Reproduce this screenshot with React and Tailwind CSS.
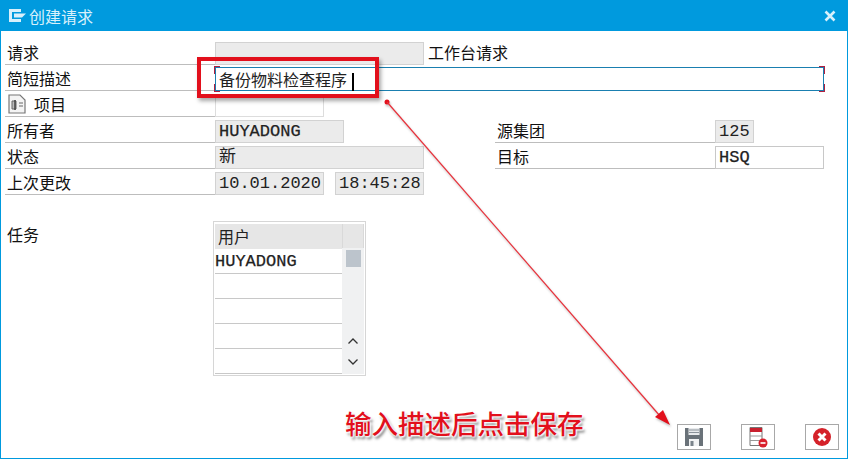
import React from 'react'

const cjk = '"Noto Sans CJK SC", "Liberation Sans", sans-serif'
const mono = '"Liberation Mono", "Noto Sans CJK SC", monospace'

const Label = ({ children, className = 'w-[210px]' }) => (
  <div className={`h-full shrink-0 border-b border-[#bdbdbd] pl-[2px] text-[16px] leading-[26px] text-[#111] ${className}`}>{children}</div>
)

const Field = ({ children, className = '', white = false }) => (
  <div className={`h-[23px] self-end shrink-0 border pl-[3px] text-[17px] leading-[22px] text-[#222] ${white ? 'bg-white border-[#c8c8c8]' : 'bg-[#ebebeb] border-[#d2d2d2]'} ${className}`} style={{ fontFamily: mono }}>
    {children}
  </div>
)

const Row = ({ children }) => <div className="flex h-[26px] shrink-0 items-end">{children}</div>

const DialogIcon = () => (
  <svg width="19" height="15" viewBox="0 0 19 15" className="shrink-0">
    <path d="M1 1h12v3H4v7h9v3H1z" fill="#d8f0fb" />
    <path d="M6 5.500h12l-4 4H6z" fill="#d8f0fb" />
  </svg>
)

const ProjectIcon = () => (
  <svg width="18" height="20" viewBox="0 0 18 20" className="shrink-0">
    <path d="M1 1h11l5 5v13H1z" fill="#f4f4f4" stroke="#777" strokeWidth="1.2" />
    <path d="M4 7h4v8H4z" fill="#bbb" stroke="#666" />
    <path d="M7 6v10" stroke="#444" strokeWidth="1.5" />
    <path d="M11 9h4M11 12h4" stroke="#666" />
  </svg>
)

const SaveIcon = () => (
  <svg width="20" height="20" viewBox="0 0 20 20">
    <path d="M1 1h18v18H1z" fill="#6a7279" />
    <path d="M4.500 1h11v7h-11z" fill="#e8eaec" />
    <path d="M5 3h10M5 5.500h10" stroke="#8a929a" />
    <path d="M5 12h10v7H5z" fill="#f2f3f4" />
    <path d="M6.500 14h3v5h-3z" fill="#7a838b" />
  </svg>
)

const DeleteRowIcon = () => (
  <svg width="20" height="22" viewBox="0 0 20 22">
    <path d="M2 1.500h12v18H2z" fill="#fff" stroke="#777" />
    <path d="M2 2h12v4H2z" fill="#c8202e" />
    <path d="M2 10h12M2 14.500h12" stroke="#999" />
    <circle cx="15" cy="17" r="4.500" fill="#d9202c" />
    <path d="M12.500 17h5" stroke="#fff" strokeWidth="1.600" />
  </svg>
)

const CancelIcon = () => (
  <svg width="20" height="20" viewBox="0 0 20 20">
    <circle cx="10" cy="10" r="9" fill="#d5222a" />
    <path d="M6.500 6.500l7 7M13.500 6.500l-7 7" stroke="#fff" strokeWidth="3" />
  </svg>
)

const FooterButton = ({ children }) => (
  <button className="flex h-[26px] w-[34px] items-center justify-center border border-[#a8a8a8] bg-white">{children}</button>
)

const Chevron = ({ d }) => (
  <svg width="10" height="6" viewBox="0 0 10 6"><path d={d} fill="none" stroke="#333" strokeWidth="1.300" /></svg>
)

const TaskTable = () => (
  <div className="flex h-[155px] w-[153px] border border-[#d6d6d6] p-[1px] pt-[2px]">
    <div className="w-[127px]">
      <div className="h-[25px] bg-[#e6e6e6] pl-[3px] text-[16px] leading-[25px] text-[#222]">用户</div>
      {['HUYADONG', '', '', '', ''].map((user, i) => (
        <div key={i} className="h-[25px] border-b border-[#c8c8c8] text-[17px] leading-[25px] text-[#222] [-webkit-text-stroke:0.25px_#222]" style={{ fontFamily: mono }}>{user}</div>
      ))}
    </div>
    <div className="flex h-[150px] w-[22px] flex-col items-center bg-[#f0f1f2]">
      <div className="h-[24px] w-full border-l border-r border-[#d9d9d9] bg-[#e6e6e6]" />
      <div className="mt-[2px] h-[17px] w-[15px] bg-[#bcc4cc]" />
      <div className="mt-auto flex flex-col items-center gap-[15px] pb-[9px]">
        <Chevron d="M0.500 5.500L5 1l4.500 4.500" />
        <Chevron d="M0.500 0.500L5 5l4.500-4.500" />
      </div>
    </div>
  </div>
)

// red frame + arrow drawn over the dialog
const Annotation = () => (
  <>
    <div className="absolute left-[197px] top-[57px] h-[41px] w-[182px] border-[4px] border-[#e2101c] shadow-[2px_3px_4px_rgba(0,0,0,0.35)]" />
    <svg className="absolute left-0 top-0 drop-shadow-[1px_2px_1px_rgba(0,0,0,0.25)]" width="848" height="459" viewBox="0 0 848 459">
      <circle cx="387" cy="102" r="2.500" fill="#e2101c" />
      <path d="M387 102L660 416" stroke="#e8303a" strokeWidth="1.200" />
      <path d="M670 425L655 417L663 410z" fill="#e2101c" />
    </svg>
  </>
)

export default function App() {
  return (
    <div className="relative flex h-[459px] w-[848px] flex-col overflow-hidden bg-white" style={{ fontFamily: cjk }}>
      <div className="flex h-[31px] shrink-0 items-center bg-[#009ade] pl-[8px] pr-[12px]">
        <DialogIcon />
        <span className="ml-[2px] text-[16px] text-[#d8f0fb]">创建请求</span>
        <svg className="ml-auto" width="12" height="12" viewBox="0 0 12 12">
          <path d="M1.500 1.500l9 9M10.500 1.500l-9 9" stroke="#d8f0fb" strokeWidth="2.600" />
        </svg>
      </div>

      <div className="flex flex-1 flex-col border-x border-b border-[#009ade] pl-[4px] pt-[8px]">
        <Row>
          <Label>请求</Label>
          <Field className="w-[209px]" />
          <span className="ml-[4px] text-[16px] leading-[26px] text-[#111]">工作台请求</span>
        </Row>
        <Row>
          <Label>简短描述</Label>
          <div className="relative h-[24px] w-[609px] self-end border border-[#1a7fb0] pl-[3px] text-[16px] leading-[22px] text-[#222]">
            备份物料检查程序
            <span className="ml-[5px] inline-block h-[18px] w-[2px] bg-black align-middle" />
            <div className="absolute -left-[2px] -top-[2px] h-[8px] w-[6px] border-l border-t border-[#b02040]" />
            <div className="absolute -bottom-[2px] -left-[2px] h-[8px] w-[6px] border-b border-l border-[#b02040]" />
            <div className="absolute -right-[2px] -top-[2px] h-[8px] w-[6px] border-r border-t border-[#b02040]" />
            <div className="absolute -bottom-[2px] -right-[2px] h-[8px] w-[6px] border-b border-r border-[#b02040]" />
          </div>
        </Row>
        <Row>
          <Label>
            <div className="flex h-full items-center gap-[8px] pl-[1px]">
              <ProjectIcon />
              项目
            </div>
          </Label>
          <Field white className="w-[109px] border-[#dddddd]" />
        </Row>
        <Row>
          <Label>所有者</Label>
          <Field className="w-[129px] [-webkit-text-stroke:0.25px_#222]">HUYADONG</Field>
          <div className="ml-[151px] flex h-full">
            <Label className="w-[220px]">源集团</Label>
            <Field className="h-[23px] w-[39px]">125</Field>
          </div>
        </Row>
        <Row>
          <Label>状态</Label>
          <Field className="w-[209px]">新</Field>
          <div className="ml-[71px] flex h-full">
            <Label className="w-[220px]">目标</Label>
            <Field white className="w-[109px] [-webkit-text-stroke:0.25px_#222]">HSQ</Field>
          </div>
        </Row>
        <Row>
          <Label>上次更改</Label>
          <Field className="w-[109px]">10.01.2020</Field>
          <Field className="ml-[11px] w-[89px]">18:45:28</Field>
        </Row>

        <div className="mt-[26px] flex">
          <div className="w-[208px] pl-[2px] text-[16px] leading-[26px] text-[#111]">任务</div>
          <TaskTable />
        </div>

        <div className="mt-auto flex justify-end gap-[30px] pb-[8px] pr-[8px]">
          <FooterButton><SaveIcon /></FooterButton>
          <FooterButton><DeleteRowIcon /></FooterButton>
          <FooterButton><CancelIcon /></FooterButton>
        </div>
      </div>

      <Annotation />
      <div className="absolute left-[345px] top-[406px] text-[26.500px] font-medium leading-[34px] text-[#e2101c] [text-shadow:0_0_2px_#fff,0_0_3px_#fff,1px_1px_2px_#fff,2px_3px_3px_rgba(0,0,0,0.6)]">输入描述后点击保存</div>
    </div>
  )
}
